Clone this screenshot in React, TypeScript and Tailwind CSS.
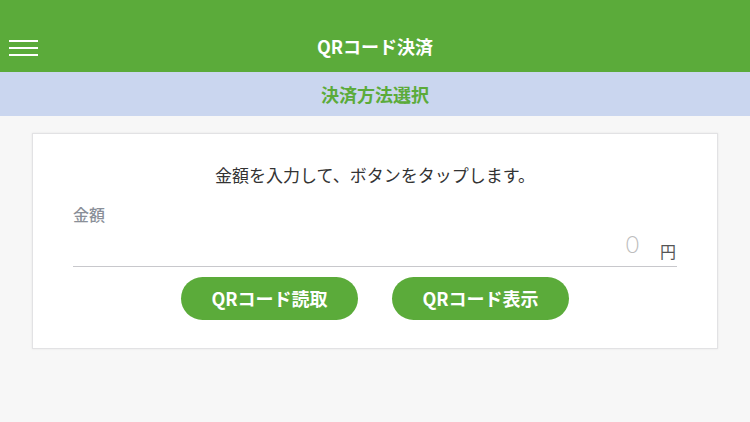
import React from "react";

export default function App() {
  const font = { fontFamily: '"Noto Sans CJK JP", "Noto Sans", sans-serif' };
  return (
    <div className="w-[750px] h-[422px] bg-[#f7f7f7] overflow-hidden" style={font}>
      <header className="relative h-[72px] bg-[#5bab3a] pt-[20px]">
        <div className="absolute left-[9px] top-[40px] flex flex-col gap-[5px]">
          <span className="block w-[29px] h-[2px] bg-white" />
          <span className="block w-[29px] h-[2px] bg-white" />
          <span className="block w-[29px] h-[2px] bg-white" />
        </div>
        <div className="h-[52px] flex items-center justify-center text-white font-bold text-[18px]">
          QRコード決済
        </div>
      </header>
      <div className="h-[44px] bg-[#cad6ef] flex items-center justify-center text-[#5bab3a] font-bold text-[18px]">
        決済方法選択
      </div>
      <div className="mx-[32px] mt-[17px] bg-white border border-[#e2e2e4] shadow-[0_0_2px_rgba(0,0,0,0.08)] pt-[29px] pb-[28px] px-[40px]">
        <p className="text-center text-[17px] leading-[24px] text-[#333]">
          金額を入力して、ボタンをタップします。
        </p>
        <div className="mt-[16px] text-[16px] leading-[22px] text-[#8a8f98] font-medium">金額</div>
        <div className="h-[42px] flex items-end justify-end pb-[5px] border-b border-[#c8c8cc]">
          <span className="font-['Lato',sans-serif] font-light text-[23px] leading-[28px] mb-[3px] mr-[21px] text-[#bdbdbd]">0</span>
          <span className="text-[16px] leading-[20px] mr-[1px] text-[#555]">円</span>
        </div>
        <div className="mt-[10px] flex justify-center gap-[34px]">
          <button className="w-[177px] h-[43px] rounded-full bg-[#5bab3a] text-white font-bold text-[18px]">
            QRコード読取
          </button>
          <button className="w-[177px] h-[43px] rounded-full bg-[#5bab3a] text-white font-bold text-[18px]">
            QRコード表示
          </button>
        </div>
      </div>
    </div>
  );
}
